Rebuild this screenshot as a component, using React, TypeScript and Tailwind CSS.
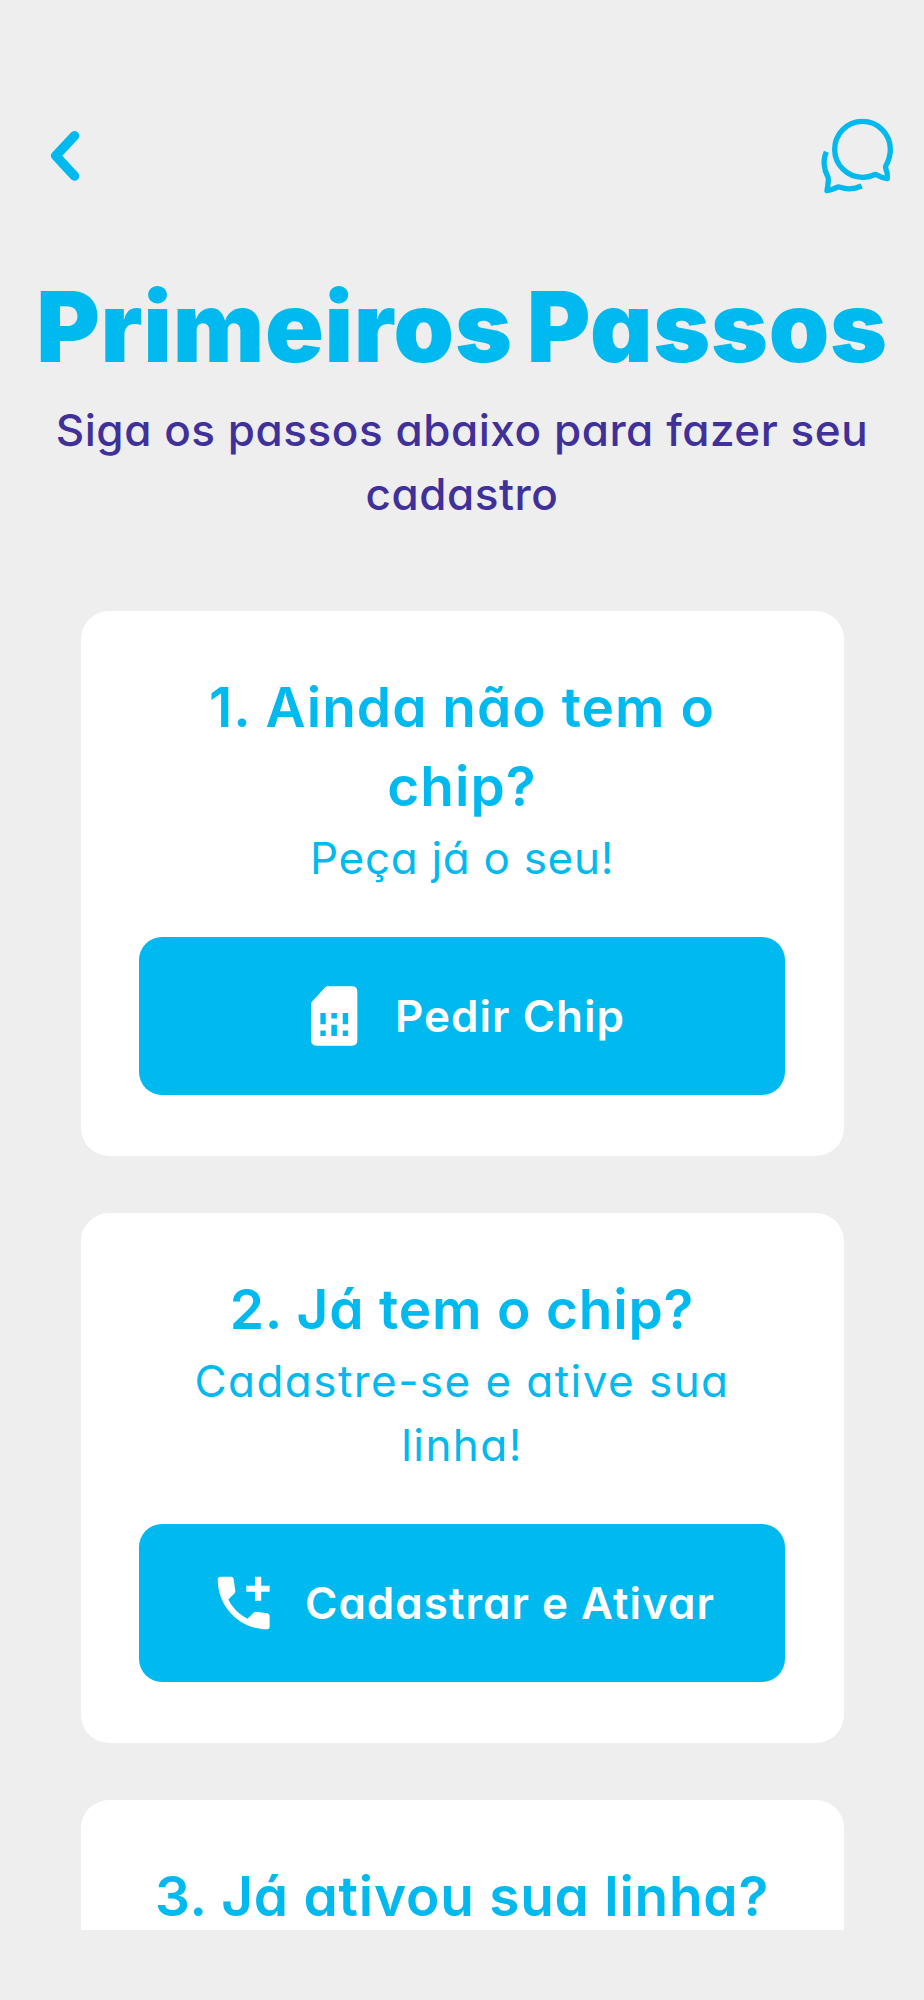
import React from "react"

type IconProps = { className?: string }

type Step = {
  title: string[]
  titleSpacing: string
  text?: string[]
  textSpacing?: string
  button?: string
  icon?: React.ComponentType<IconProps>
}

function SimIcon({ className }: IconProps) {
  return (
    <svg viewBox="0 0 72 72" fill="currentColor" className={className}>
      <path
        fillRule="evenodd"
        d="M29.5 5.500H54.500Q60 5.500 60 11V61Q60 66.500 54.500 66.500H18Q12.500 66.500 12.500 61V23.500Q12.500 22 13.500 21L27 6.500Q28 5.500 29.500 5.500ZM22 33V44.500H27.500V33ZM33.300 33V38.500H39V33ZM45 33V44.500H50.500V33ZM33.300 45V56.500H39V45ZM22 51V56.500H27.500V51ZM45 51V56.500H50.500V51Z"
      />
    </svg>
  )
}

function PhonePlusIcon({ className }: IconProps) {
  return (
    <svg viewBox="0 0 24 24" fill="currentColor" className={className}>
      <path d="M20 15.500L16.300 15Q15.700 14.900 15.300 15.300L13.200 17.400C10.380 15.930 8.060 13.620 6.620 10.790L8.700 8.700Q9.100 8.300 9 7.700L8.500 4Q8.400 3 7.500 3H4Q3 3 3 4C3 13.390 10.610 21 20 21Q20.800 21 20.800 20V16.500Q20.800 15.600 20 15.500ZM20.800 6.100H17.900V3H15.800V6.100H12.800V8.100H15.800V11.200H17.900V8.100H20.800Z" />
    </svg>
  )
}

function ChatIcon({ className }: IconProps) {
  return (
    <svg
      viewBox="120 80 222 234"
      fill="none"
      stroke="currentColor"
      strokeWidth="16"
      strokeLinejoin="round"
      className={className}
    >
      <path d="M317 227Q331 203 331 177A83.500 84 0 1 0 248 261Q266 261 281 254Q286 251 291 254Q304 262 322 265Q324 250 317 233Q316 230 317 227Z" />
      <path d="M139 184Q130 206 133 226Q135 244 142 256Q146 262 145 270Q144 284 141 301Q156 299 169 292Q175 288 181 291Q210 302 245 287" />
    </svg>
  )
}

const steps: Step[] = [
  {
    title: ["1. Ainda não tem o", "chip?"],
    titleSpacing: "tracking-[1px]",
    text: ["Peça já o seu!"],
    textSpacing: "tracking-[0.7px]",
    button: "Pedir Chip",
    icon: SimIcon
  },
  {
    title: ["2. Já tem o chip?"],
    titleSpacing: "tracking-[0.8px]",
    text: ["Cadastre-se e ative sua", "linha!"],
    textSpacing: "tracking-[1.45px]",
    button: "Cadastrar e Ativar",
    icon: PhonePlusIcon
  },
  {
    title: ["3. Já ativou sua linha?"],
    titleSpacing: "tracking-[0.75px]"
  }
]

function StepCard({ title, titleSpacing, text, textSpacing, button, icon: Icon }: Step) {
  return (
    <section className="shrink-0 rounded-[28px] bg-white pt-[57px] pr-[59px] pb-[61px] pl-[58px] text-center whitespace-nowrap">
      <h2
        className={`text-[55px] leading-[79px] font-semibold ${titleSpacing}`}
      >
        {title.map((line) => (
          <span key={line} className="block">
            {line}
          </span>
        ))}
      </h2>
      {text && (
        <p className={`text-[44px] leading-[64px] ${textSpacing}`}>
          {text.map((line) => (
            <span key={line} className="block">
              {line}
            </span>
          ))}
        </p>
      )}
      {button && Icon && (
        <button className="mt-[47px] flex h-[158px] w-full items-center justify-center gap-[26px] rounded-[23px] bg-[#00b9ee] text-[44px] font-semibold tracking-[1px] text-white">
          <Icon className="size-[70px] shrink-0" />
          <span>{button}</span>
        </button>
      )}
    </section>
  )
}

function App() {
  return (
    <div className="flex h-[2000px] w-[924px] flex-col bg-[#eeeeee] pb-[70px] font-['Inter',sans-serif] text-[#00b9ee] [font-feature-settings:'cv11']">
      <div className="flex min-h-0 flex-1 flex-col overflow-hidden">
        <header className="flex h-[267px] shrink-0 items-start justify-between pt-[117px] pr-[30px] pl-[50px]">
          <button className="mt-[13px]" aria-label="Voltar">
            <svg
              viewBox="0 0 30 52"
              fill="none"
              stroke="currentColor"
              strokeWidth="9.500"
              strokeLinecap="round"
              strokeLinejoin="round"
              className="h-[52px] w-[30px]"
            >
              <path d="M24.500 5.700L5.800 25.800L24.500 46" />
            </svg>
          </button>
          <button aria-label="Atendimento">
            <ChatIcon className="h-[78px] w-[74px]" />
          </button>
        </header>

        <div className="shrink-0 text-center whitespace-nowrap">
          <h1 className="text-[97px] leading-[120px] font-black tracking-[0.7px] [word-spacing:-6px]">
            Primeiros Passos
          </h1>
          <p className="mt-[11px] text-[44px] leading-[64px] font-medium tracking-[0.55px] text-[#40309a]">
            Siga os passos abaixo para fazer seu
            <br />
            cadastro
          </p>
        </div>

        <div className="mt-[85px] flex flex-col gap-[57px] pr-[80px] pl-[81px]">
          {steps.map((step) => (
            <StepCard key={step.title[0]} {...step} />
          ))}
        </div>
      </div>
    </div>
  )
}

export default App
